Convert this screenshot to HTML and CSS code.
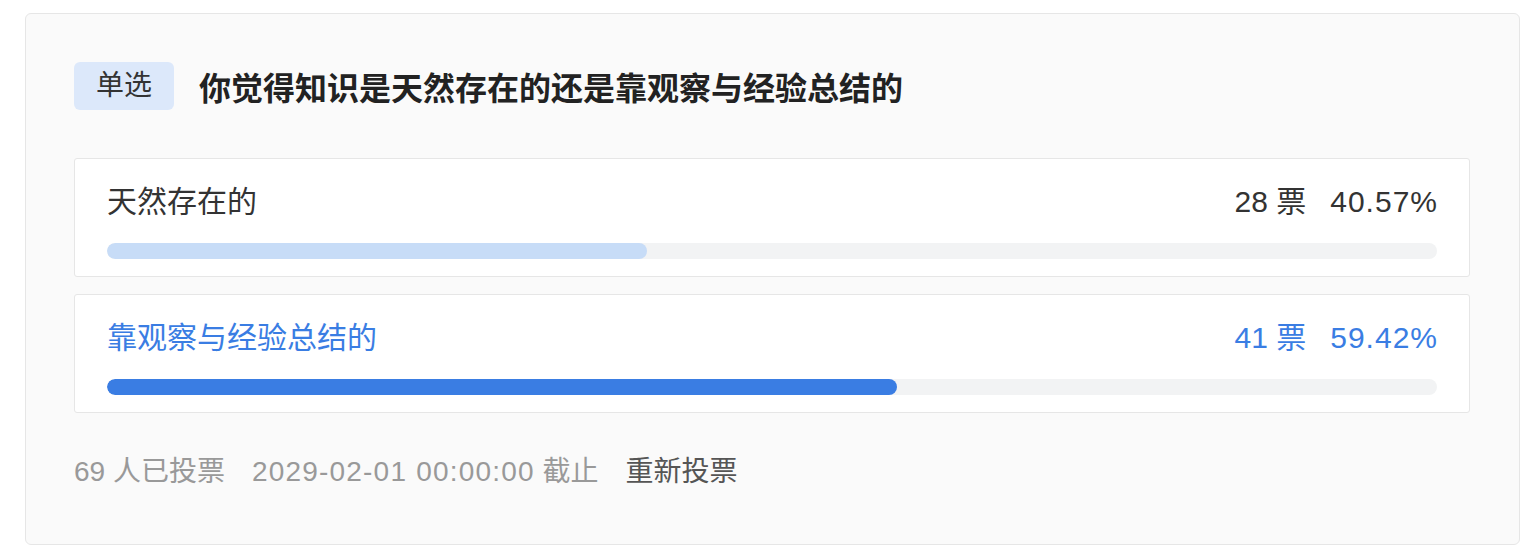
FILE: index.html
```html
<!DOCTYPE html>
<html>
  <head>
    <meta charset="utf-8">
    <meta name="viewport" content="width=device-width, initial-scale=1.0">
    <title>投票</title>
    <link rel="stylesheet" href="styles.css">
  </head>
  <body>
    <div class="poll">
      <div class="poll-head">
        <span class="poll-tag">单选</span>
        <h2 class="poll-title">你觉得知识是天然存在的还是靠观察与经验总结的</h2>
      </div>

      <div class="poll-options">
        <div class="option">
          <div class="option-row">
            <span class="option-label">天然存在的</span>
            <span class="option-stat">
              <span class="option-votes">28 票</span>
              <span class="option-pct">40.57%</span>
            </span>
          </div>
          <div class="bar"><div class="bar-fill" style="width: 40.57%"></div></div>
        </div>

        <div class="option is-voted">
          <div class="option-row">
            <span class="option-label">靠观察与经验总结的</span>
            <span class="option-stat">
              <span class="option-votes">41 票</span>
              <span class="option-pct">59.42%</span>
            </span>
          </div>
          <div class="bar"><div class="bar-fill" style="width: 59.42%"></div></div>
        </div>
      </div>

      <div class="poll-foot">
        <span class="foot-item">69 人已投票</span>
        <span class="foot-item"><span class="foot-date">2029-02-01 00:00:00</span> 截止</span>
        <a class="foot-link">重新投票</a>
      </div>
    </div>
  </body>
</html>
```

FILE: styles.css
```css
html, body {
  margin: 0;
  padding: 0;
  background-color: #fff;
  color: #333;
  font-family: "Liberation Sans", "Noto Sans CJK SC", sans-serif;
}
body {
  padding: 13px 20px 0 25px;
}
.poll {
  box-sizing: border-box;
  width: 1495px;
  padding: 48px 49px 52px 48px;
  background-color: #fafafa;
  border: 1px solid #e6e6e6;
  border-radius: 6px;
}
.poll-head {
  display: flex;
  align-items: center;
  gap: 25px;
}
.poll-tag {
  display: inline-block;
  height: 48px;
  line-height: 48px;
  padding: 0 22px;
  background-color: #dce8fa;
  border-radius: 6px;
  color: #333;
  font-size: 28px;
}
.poll-title {
  margin: 0;
  font-size: 32px;
  font-weight: bold;
  color: #222;
}
.poll-options {
  display: flex;
  flex-direction: column;
  gap: 17px;
  margin-top: 48px;
}
.option {
  padding: 22px 32px 17px 32px;
  background-color: #fff;
  border: 1px solid #e6e6e6;
  border-radius: 3px;
}
.option-row {
  display: flex;
  justify-content: space-between;
  align-items: baseline;
  height: 42px;
  line-height: 42px;
  font-size: 30px;
  color: #333;
}
.option-stat {
  display: flex;
  align-items: baseline;
  gap: 24px;
}
.option-pct {
  letter-spacing: 1px;
  margin-right: -1px;
}
.bar {
  height: 16px;
  margin-top: 20px;
  background-color: #f2f3f4;
  border-radius: 8px;
  overflow: hidden;
}
.bar-fill {
  height: 100%;
  background-color: #c7dcf7;
  border-radius: 8px;
}
.is-voted .option-row {
  color: #3a7de3;
}
.is-voted .bar-fill {
  background-color: #3a7de3;
}
.poll-foot {
  display: flex;
  gap: 27px;
  margin-top: 39px;
  line-height: 40px;
  font-size: 28px;
  color: #999;
}
.foot-date {
  letter-spacing: 1.2px;
}
.foot-link {
  color: #555;
  cursor: pointer;
}
```
